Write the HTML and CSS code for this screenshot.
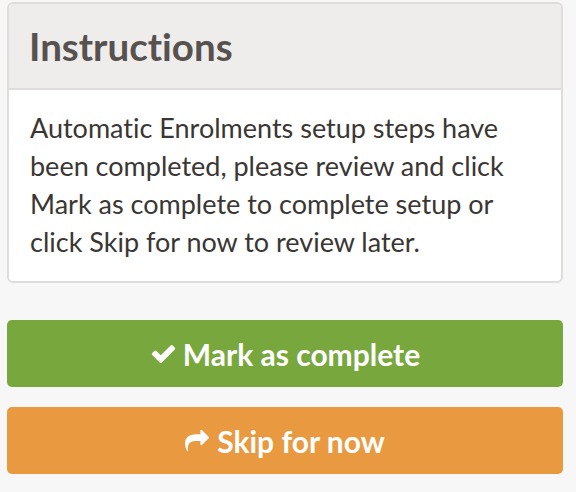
FILE: index.html
```html
<!DOCTYPE html>
<html>
<head>
<meta charset="utf-8">
<link rel="stylesheet" href="styles.css">
</head>
<body>
<div class="page">
  <div class="card">
    <div class="card-header"><h2 class="title">Instructions</h2></div>
    <div class="card-body">
      <p class="text">Automatic Enrolments setup steps have been completed, please review and click Mark as complete to complete setup or click Skip for now to review later.</p>
    </div>
  </div>
  <button class="btn btn-green"><svg class="icon icon-check" viewBox="0 0 1792 1792"><path fill="#fff" d="M1671 566q0 40-28 68l-724 724-136 136q-28 28-68 28t-68-28l-136-136-362-362q-28-28-28-68t28-68l136-136q28-28 68-28t68 28l294 295 656-657q28-28 68-28t68 28l136 136q28 28 28 68z"/></svg>Mark as complete</button>
  <button class="btn btn-orange"><svg class="icon icon-share" viewBox="0 0 1792 1792"><path fill="#fff" d="M1792 640q0 26-19 45l-512 512q-19 19-45 19t-45-19-19-45v-256h-224q-98 0-175.5 6t-154 21.5-133 42.5-105.5 69.5-80 101-48.5 138.5-17.5 181q0 55 5 123 0 6 2.5 23.5t2.5 26.5q0 15-8.5 25t-23.5 10q-16 0-28-17-7-9-13-22t-13.5-30-10.5-24q-127-285-127-451 0-199 53-333 162-403 875-403h224v-256q0-26 19-45t45-19 45 19l512 512q19 19 19 45z"/></svg>Skip for now</button>
</div>
</body>
</html>
```

FILE: styles.css
```css
html, body {
  margin: 0;
  padding: 0;
  background: #f7f7f7;
}
body {
  font-family: "Lato", "Open Sans", sans-serif;
  font-variant-ligatures: none;
}
.page {
  width: 556px;
  padding: 2px 0 0 7px;
  display: flex;
  flex-direction: column;
}
.card {
  background: #fff;
  border: 2px solid #dedddc;
  border-radius: 6px;
  overflow: hidden;
}
.card-header {
  background: #eeedec;
  border-bottom: 2px solid #dedddc;
  height: 84px;
  display: flex;
  align-items: center;
  padding-left: 20px;
}
.title {
  margin: 0;
  font-size: 38.5px;
  line-height: 48px;
  font-weight: 700;
  color: #57514f;
}
.card-body {
  padding: 19px 18px 20px 21px;
}
.text {
  margin: 0;
  font-size: 27px;
  line-height: 38px;
  color: #3a3634;
}
.btn {
  border: none;
  border-radius: 5px;
  height: 67px;
  margin: 0;
  padding: 0;
  color: #fff;
  font-family: "Lato", "Open Sans", sans-serif;
  font-variant-ligatures: none;
  font-size: 30px;
  font-weight: 700;
  display: flex;
  align-items: center;
  justify-content: center;
  gap: 6px;
}
.btn-green {
  background: #78a83d;
  margin-top: 37px;
}
.btn-orange {
  background: #e9993f;
  margin-top: 20px;
}
.icon-check {
  width: 27px;
  height: 27px;
}
.icon-share {
  width: 24px;
  height: 24px;
  margin-right: 2px;
}
```
